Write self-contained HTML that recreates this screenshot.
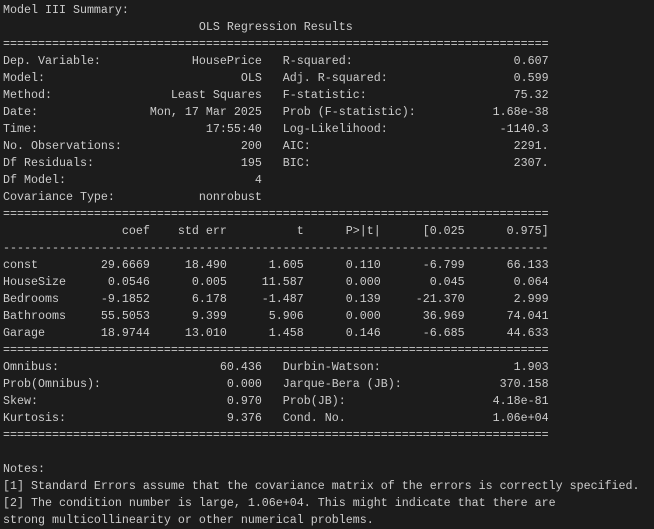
<!DOCTYPE html>
<html><head><meta charset="utf-8"><style>
html,body{margin:0;padding:0;background:#1c1c1c;width:654px;height:529px;overflow:hidden}
pre{margin:0;position:absolute;left:3px;top:2px;font-family:"Liberation Mono",monospace;font-size:11.67px;line-height:17px;color:#cccccc;white-space:pre}
</style></head><body><pre>Model III Summary:
                            OLS Regression Results                            
==============================================================================
Dep. Variable:             HousePrice   R-squared:                       0.607
Model:                            OLS   Adj. R-squared:                  0.599
Method:                 Least Squares   F-statistic:                     75.32
Date:                Mon, 17 Mar 2025   Prob (F-statistic):           1.68e-38
Time:                        17:55:40   Log-Likelihood:                -1140.3
No. Observations:                 200   AIC:                             2291.
Df Residuals:                     195   BIC:                             2307.
Df Model:                           4                                         
Covariance Type:            nonrobust                                         
==============================================================================
                 coef    std err          t      P&gt;|t|      [0.025      0.975]
------------------------------------------------------------------------------
const         29.6669     18.490      1.605      0.110      -6.799      66.133
HouseSize      0.0546      0.005     11.587      0.000       0.045       0.064
Bedrooms      -9.1852      6.178     -1.487      0.139     -21.370       2.999
Bathrooms     55.5053      9.399      5.906      0.000      36.969      74.041
Garage        18.9744     13.010      1.458      0.146      -6.685      44.633
==============================================================================
Omnibus:                       60.436   Durbin-Watson:                   1.903
Prob(Omnibus):                  0.000   Jarque-Bera (JB):              370.158
Skew:                           0.970   Prob(JB):                     4.18e-81
Kurtosis:                       9.376   Cond. No.                     1.06e+04
==============================================================================

Notes:
[1] Standard Errors assume that the covariance matrix of the errors is correctly specified.
[2] The condition number is large, 1.06e+04. This might indicate that there are
strong multicollinearity or other numerical problems.</pre></body></html>
